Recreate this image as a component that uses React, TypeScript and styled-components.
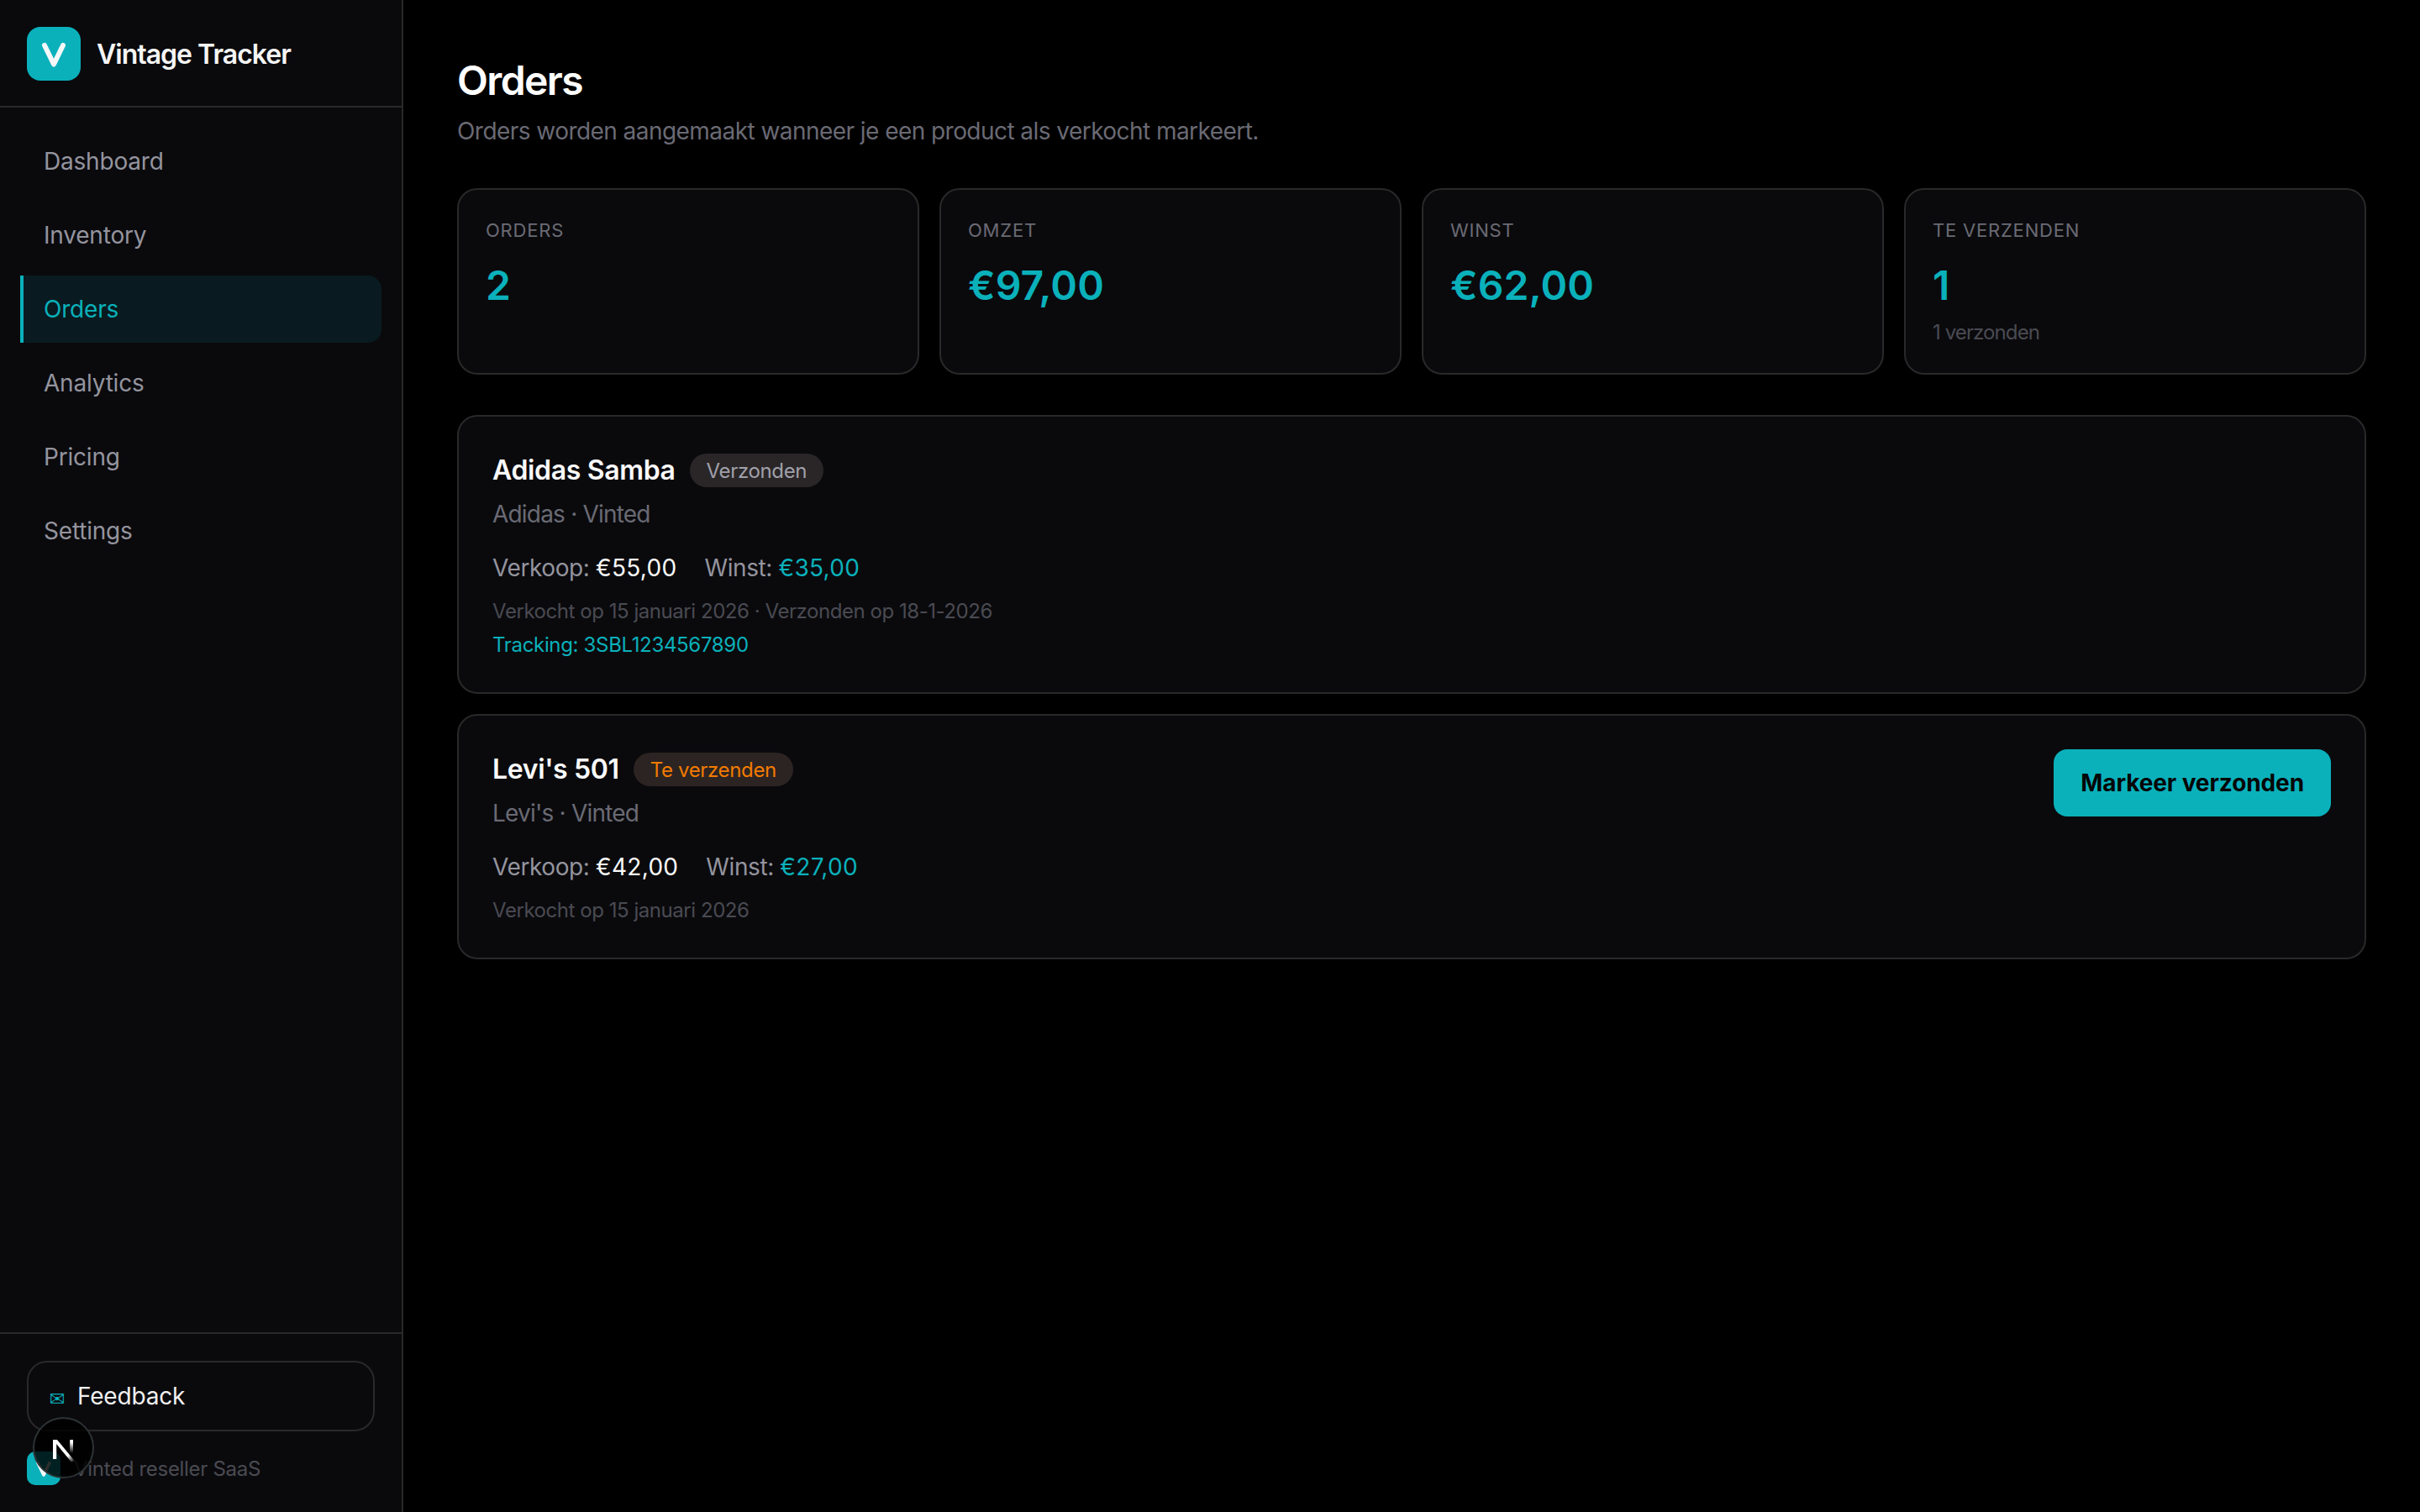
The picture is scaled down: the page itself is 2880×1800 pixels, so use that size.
import React, { FunctionComponent } from 'react'
import styled, { createGlobalStyle } from 'styled-components'

const teal = '#0ab1bb'
const line = '#2a2829'

const GlobalStyle = createGlobalStyle`
  html, body {
    margin: 0;
    background: #000;
    font-family: Inter, "Liberation Sans", sans-serif;
  }
  * { box-sizing: border-box; }
`

const Page = styled.div`
  display: flex;
  min-height: 100vh;
  background: #000;
`

const Sidebar = styled.aside`
  width: 480px;
  flex-shrink: 0;
  display: flex;
  flex-direction: column;
  background: #0a0a0d;
  border-right: 2px solid ${line};
`

const Brand = styled.div`
  display: flex;
  align-items: center;
  gap: 19px;
  padding: 32px 32px 30px;
  border-bottom: 2px solid ${line};
`

const LogoBox = styled.div<{ $size: number }>`
  width: ${(p) => p.$size}px;
  height: ${(p) => p.$size}px;
  border-radius: ${(p) => p.$size / 4}px;
  background: ${teal};
  flex-shrink: 0;
  line-height: 0;
`

const BrandName = styled.span`
  font-size: 32px;
  font-weight: 600;
  color: #f5f5f5;
  letter-spacing: -1px;
`

const Nav = styled.nav`
  flex: 1;
  display: flex;
  flex-direction: column;
  gap: 8px;
  padding: 24px 24px 0;
`

const NavItem = styled.a<{ $active?: boolean }>`
  height: 80px;
  display: flex;
  align-items: center;
  width: 430px;
  padding-left: ${(p) => (p.$active ? 24 : 28)}px;
  font-size: 28px;
  color: ${(p) => (p.$active ? teal : '#94949e')};
  background: ${(p) => (p.$active ? '#091b20' : 'transparent')};
  border-left: ${(p) => (p.$active ? `4px solid ${teal}` : 'none')};
  border-radius: ${(p) => (p.$active ? '0 16px 16px 0' : '16px')};
  letter-spacing: -0.2px;
`

const SideFooter = styled.div`
  border-top: 2px solid ${line};
  padding: 32px 32px 32px;
  display: flex;
  flex-direction: column;
  gap: 24px;
`

const FeedbackButton = styled.button`
  width: 414px;
  height: 84px;
  display: flex;
  align-items: center;
  gap: 15px;
  padding: 0 0 0 25px;
  background: transparent;
  border: 2px solid ${line};
  border-radius: 24px;
  color: #f0f0f0;
  font-family: inherit;
  font-size: 28px;
  letter-spacing: -0.2px;
`

const MailGlyph = styled.span`
  color: ${teal};
  font-size: 22px;
  width: 18px;
  margin-top: 6px;
  font-family: "DejaVu Sans", sans-serif;
`

const Tagline = styled.div`
  display: flex;
  align-items: center;
  gap: 16px;
  font-size: 24px;
  color: #4a4a52;
  letter-spacing: -0.3px;
`

const DevBadge = styled.div`
  position: fixed;
  left: 39px;
  top: 1687px;
  width: 73px;
  height: 73px;
  border-radius: 50%;
  background: rgba(0, 0, 0, 0.82);
  border: 2px solid #2c3334;
  display: flex;
  align-items: center;
  justify-content: center;
`

const Main = styled.main`
  flex: 1;
  min-width: 0;
  padding: 66px 64px 64px;
`

const Title = styled.h1`
  margin: 0;
  font-size: 48px;
  line-height: 60px;
  font-weight: 600;
  color: #fff;
  letter-spacing: -1.6px;
`

const Subtitle = styled.p`
  margin: 10px 0 48px;
  font-size: 28px;
  line-height: 40px;
  color: #6a6a74;
  letter-spacing: -0.55px;
`

const StatGrid = styled.section`
  display: grid;
  grid-template-columns: repeat(4, 1fr);
  gap: 24px;
  margin-bottom: 48px;
`

const StatCard = styled.div`
  background: #0a0a0d;
  border: 2px solid ${line};
  border-radius: 24px;
  padding: 32px;
  height: 222px;
`

const StatLabel = styled.div`
  font-size: 22px;
  line-height: 32px;
  letter-spacing: 0.8px;
  color: #6a6a74;
  text-transform: uppercase;
`

const StatValue = styled.div`
  margin-top: 18px;
  font-size: 48px;
  line-height: 64px;
  font-weight: 600;
  color: ${teal};
  letter-spacing: 0.1px;
`

const StatNote = styled.div`
  margin-top: 8px;
  font-size: 24px;
  line-height: 32px;
  color: #4a4a52;
  letter-spacing: -0.9px;
`

const OrderList = styled.section`
  display: flex;
  flex-direction: column;
  gap: 24px;
`

const OrderCard = styled.article`
  display: flex;
  justify-content: space-between;
  align-items: flex-start;
  background: #0a0a0d;
  border: 2px solid ${line};
  border-radius: 24px;
  padding: 40px;
`

const OrderHead = styled.div`
  display: flex;
  align-items: center;
  gap: 17px;
  height: 48px;
`

const OrderName = styled.h2`
  margin: 0;
  font-size: 32px;
  line-height: 48px;
  font-weight: 600;
  color: #fafafa;
  letter-spacing: -0.35px;
`

const Badge = styled.span<{ $tone: 'neutral' | 'warn' }>`
  height: 40px;
  display: flex;
  align-items: center;
  padding: 0 20px;
  border-radius: 20px;
  font-size: 24px;
  letter-spacing: -0.35px;
  background: ${(p) => (p.$tone === 'warn' ? '#2c2422' : '#2a2627')};
  color: ${(p) => (p.$tone === 'warn' ? '#f27b00' : '#a0a0aa')};
`

const OrderMeta = styled.div`
  margin-top: 8px;
  font-size: 28px;
  line-height: 40px;
  color: #6a6a74;
  letter-spacing: -0.8px;
`

const Prices = styled.div`
  margin-top: 24px;
  display: flex;
  gap: 33px;
  font-size: 28px;
  line-height: 40px;
  color: #94949e;
  letter-spacing: -0.4px;
`

const Amount = styled.span<{ $profit?: boolean }>`
  color: ${(p) => (p.$profit ? teal : '#fafafa')};
  letter-spacing: 0.3px;
`

const OrderDate = styled.div`
  margin-top: 16px;
  font-size: 24px;
  line-height: 32px;
  color: #4a4a52;
  letter-spacing: -0.45px;
`

const Tracking = styled.div`
  margin-top: 8px;
  font-size: 24px;
  line-height: 32px;
  color: ${teal};
  letter-spacing: -0.33px;
`

const ShipButton = styled.button`
  height: 80px;
  padding: 0 32px;
  border: none;
  border-radius: 16px;
  background: ${teal};
  color: #040506;
  font-family: inherit;
  font-size: 28px;
  font-weight: 700;
  letter-spacing: -0.1px;
`

const links = ['Dashboard', 'Inventory', 'Orders', 'Analytics', 'Pricing', 'Settings']

const stats = [
  { label: 'Orders', value: '2' },
  { label: 'Omzet', value: '€97,00' },
  { label: 'Winst', value: '€62,00' },
  { label: 'Te verzenden', value: '1', note: '1 verzonden' }
]

const Logo: FunctionComponent<{ size: number }> = ({ size }) => (
  <LogoBox $size={size}>
    <svg width={size} height={size} viewBox="0 0 64 64" fill="none">
      <path
        d="M21 22 L32 44.5 L43 22"
        stroke="#f5f7f8"
        strokeWidth="6"
        strokeLinecap="round"
        strokeLinejoin="round"
      />
    </svg>
  </LogoBox>
)

const NextMark: FunctionComponent = () => (
  <svg width="40" height="40" viewBox="0 0 40 40" fill="none">
    <defs>
      <linearGradient id="nFade" x1="18" y1="20" x2="33" y2="36" gradientUnits="userSpaceOnUse">
        <stop offset="0.5" stopColor="#fff" />
        <stop offset="1" stopColor="#fff" stopOpacity="0" />
      </linearGradient>
      <linearGradient id="nBar" x1="29" y1="10" x2="29" y2="26" gradientUnits="userSpaceOnUse">
        <stop offset="0.2" stopColor="#fff" />
        <stop offset="1" stopColor="#fff" stopOpacity="0" />
      </linearGradient>
    </defs>
    <path d="M7 10h4.2v23H7z" fill="#fff" />
    <path d="M7 10h5L33.5 36h-5z" fill="url(#nFade)" />
    <path d="M27.2 10h3.8v16h-3.8z" fill="url(#nBar)" />
  </svg>
)

export default function App() {
  return (
    <Page>
      <GlobalStyle />
      <Sidebar>
        <Brand>
          <Logo size={64} />
          <BrandName>Vintage Tracker</BrandName>
        </Brand>
        <Nav>
          {links.map((link) => (
            <NavItem key={link} $active={link === 'Orders'}>{link}</NavItem>
          ))}
        </Nav>
        <SideFooter>
          <FeedbackButton>
            <MailGlyph>✉</MailGlyph>
            Feedback
          </FeedbackButton>
          <Tagline>
            <Logo size={40} />
            Vinted reseller SaaS
          </Tagline>
        </SideFooter>
      </Sidebar>
      <Main>
        <Title>Orders</Title>
        <Subtitle>Orders worden aangemaakt wanneer je een product als verkocht markeert.</Subtitle>
        <StatGrid>
          {stats.map((stat) => (
            <StatCard key={stat.label}>
              <StatLabel>{stat.label}</StatLabel>
              <StatValue>{stat.value}</StatValue>
              {stat.note && <StatNote>{stat.note}</StatNote>}
            </StatCard>
          ))}
        </StatGrid>
        <OrderList>
          <OrderCard>
            <div>
              <OrderHead>
                <OrderName>Adidas Samba</OrderName>
                <Badge $tone="neutral">Verzonden</Badge>
              </OrderHead>
              <OrderMeta>Adidas · Vinted</OrderMeta>
              <Prices>
                <span>Verkoop: <Amount>€55,00</Amount></span>
                <span>Winst: <Amount $profit>€35,00</Amount></span>
              </Prices>
              <OrderDate>Verkocht op 15 januari 2026 · Verzonden op 18-1-2026</OrderDate>
              <Tracking>Tracking: 3SBL1234567890</Tracking>
            </div>
          </OrderCard>
          <OrderCard>
            <div>
              <OrderHead>
                <OrderName>Levi's 501</OrderName>
                <Badge $tone="warn">Te verzenden</Badge>
              </OrderHead>
              <OrderMeta>Levi's · Vinted</OrderMeta>
              <Prices>
                <span>Verkoop: <Amount>€42,00</Amount></span>
                <span>Winst: <Amount $profit>€27,00</Amount></span>
              </Prices>
              <OrderDate>Verkocht op 15 januari 2026</OrderDate>
            </div>
            <ShipButton>Markeer verzonden</ShipButton>
          </OrderCard>
        </OrderList>
      </Main>
      <DevBadge>
        <NextMark />
      </DevBadge>
    </Page>
  )
}
